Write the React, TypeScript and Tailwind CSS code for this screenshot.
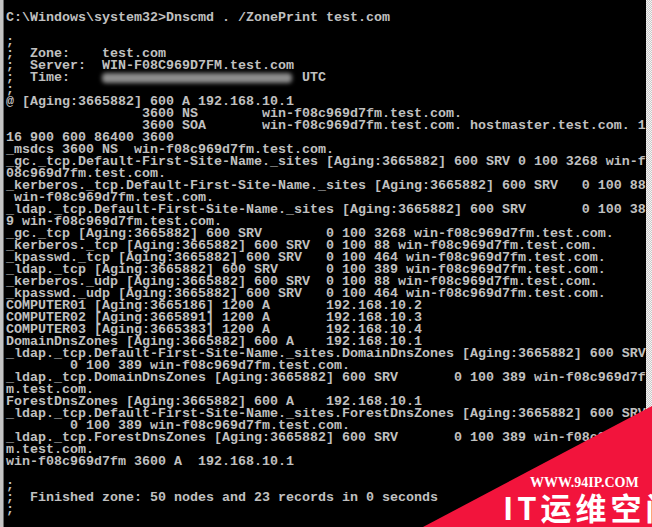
import React from "react";

const S = (n: number) => " ".repeat(n);

const lines: (string | null)[] = [
  "C:\\Windows\\system32>Dnscmd . /ZonePrint test.com",
  "",
  ";",
  ";  Zone:    test.com",
  ";  Server:  WIN-F08C969D7FM.test.com",
  null,
  ";",
  "@ [Aging:3665882] 600 A 192.168.10.1",
  S(17) + "3600 NS" + S(8) + "win-f08c969d7fm.test.com.",
  S(17) + "3600 SOA" + S(7) + "win-f08c969d7fm.test.com. hostmaster.test.com. 1",
  "16 900 600 86400 3600",
  "_msdcs 3600 NS  win-f08c969d7fm.test.com.",
  "_gc._tcp.Default-First-Site-Name._sites [Aging:3665882] 600 SRV 0 100 3268 win-f",
  "08c969d7fm.test.com.",
  "_kerberos._tcp.Default-First-Site-Name._sites [Aging:3665882] 600 SRV   0 100 88",
  " win-f08c969d7fm.test.com.",
  "_ldap._tcp.Default-First-Site-Name._sites [Aging:3665882] 600 SRV       0 100 38",
  "9 win-f08c969d7fm.test.com.",
  "_gc._tcp [Aging:3665882] 600 SRV" + S(8) + "0 100 3268 win-f08c969d7fm.test.com.",
  "_kerberos._tcp [Aging:3665882] 600 SRV" + S(2) + "0 100 88 win-f08c969d7fm.test.com.",
  "_kpasswd._tcp [Aging:3665882] 600 SRV" + S(3) + "0 100 464 win-f08c969d7fm.test.com.",
  "_ldap._tcp [Aging:3665882] 600 SRV" + S(6) + "0 100 389 win-f08c969d7fm.test.com.",
  "_kerberos._udp [Aging:3665882] 600 SRV" + S(2) + "0 100 88 win-f08c969d7fm.test.com.",
  "_kpasswd._udp [Aging:3665882] 600 SRV" + S(3) + "0 100 464 win-f08c969d7fm.test.com.",
  "COMPUTER01 [Aging:3665186] 1200 A" + S(7) + "192.168.10.2",
  "COMPUTER02 [Aging:3665891] 1200 A" + S(7) + "192.168.10.3",
  "COMPUTER03 [Aging:3665383] 1200 A" + S(7) + "192.168.10.4",
  "DomainDnsZones [Aging:3665882] 600 A" + S(4) + "192.168.10.1",
  "_ldap._tcp.Default-First-Site-Name._sites.DomainDnsZones [Aging:3665882] 600 SRV",
  S(8) + "0 100 389 win-f08c969d7fm.test.com.",
  "_ldap._tcp.DomainDnsZones [Aging:3665882] 600 SRV" + S(7) + "0 100 389 win-f08c969d7f",
  "m.test.com.",
  "ForestDnsZones [Aging:3665882] 600 A" + S(4) + "192.168.10.1",
  "_ldap._tcp.Default-First-Site-Name._sites.ForestDnsZones [Aging:3665882] 600 SRV",
  S(8) + "0 100 389 win-f08c969d7fm.test.com.",
  "_ldap._tcp.ForestDnsZones [Aging:3665882] 600 SRV" + S(7) + "0 100 389 win-f08c969d7f",
  "m.test.com.",
  "win-f08c969d7fm 3600 A  192.168.10.1",
  "",
  ";",
  ";  Finished zone: 50 nodes and 23 records in 0 seconds",
  ";",
];

export default function App() {
  return (
    <div className="relative flex h-[527px] w-[652px] overflow-hidden bg-black">
      <div className="flex h-full w-[4px] shrink-0">
        <div className="h-full w-[3px] bg-[#c4c4c4]" />
        <div className="h-full w-[1px] bg-[#6a6a6a]" />
      </div>
      <div
        className="flex-1 whitespace-pre pl-[2px] pt-[12px] text-[13.333px] font-bold leading-[12px] text-[#c0c0c0]"
        style={{ fontFamily: '"Liberation Mono", "DejaVu Sans Mono", monospace' }}
      >
        {lines.map((l, i) =>
          l === null ? (
            <div key={i} className="flex h-[12px] items-center">
              <span>{";  Time:    "}</span>
              <span className="inline-flex h-[12px] w-[192px] items-center">
                <span className="block h-[10px] w-[190px] rounded-sm bg-[#8e8e8e] blur-[2px]" />
              </span>
              <span>{" UTC"}</span>
            </div>
          ) : (
            <div key={i} className="h-[12px]">
              {l}
            </div>
          )
        )}
      </div>
      <div className="h-full w-[6px] shrink-0 bg-[repeating-conic-gradient(#c8c8c8_0%_25%,#f4f4f4_0%_50%)] bg-[length:2px_2px]" />

      <svg className="absolute left-0 top-0" width="652" height="527" viewBox="0 0 652 527">
        <polygon points="423,527 652,527 652,406" fill="#f2143c" />
      </svg>
      <div
        className="absolute left-[530px] top-[476px] text-[14px] font-bold leading-[14px] text-white"
        style={{ fontFamily: '"Liberation Serif", serif' }}
      >
        WWW.94IP.COM
      </div>
      <div
        className="absolute left-[503px] top-[491px] whitespace-nowrap text-[31px] font-bold leading-[31px] tracking-[4px] text-white"
        style={{ fontFamily: '"Noto Sans CJK SC", "Noto Sans", sans-serif' }}
      >
        IT运维空间
      </div>
    </div>
  );
}
